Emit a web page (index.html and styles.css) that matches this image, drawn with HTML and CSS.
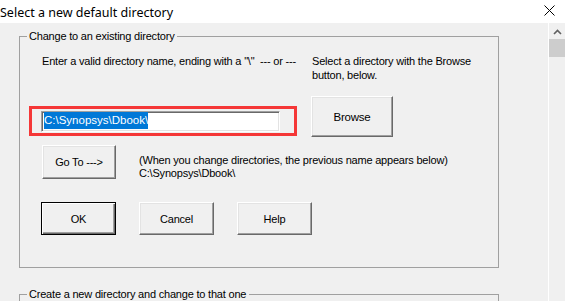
FILE: index.html
```html
<!DOCTYPE html>
<html lang="en">
<head>
    <meta charset="UTF-8">
    <title>Select a new default directory</title>
    <link rel="stylesheet" href="styles.css">
</head>
<body>
    <div class="titlebar">
        <span class="title">Select a new default directory</span>
        <svg class="close" width="11" height="11" viewBox="0 0 11 11">
            <path d="M0.5 0.5 L10.5 10.5 M10.5 0.5 L0.5 10.5" stroke="#000" stroke-width="1" fill="none"/>
        </svg>
    </div>

    <div class="window">
        <div class="pane">
            <fieldset class="group">
                <legend>Change to an existing directory</legend>

                <div class="row intro">
                    <div class="col-left">Enter a valid directory name, ending with a "\" &nbsp;--- or ---</div>
                    <div class="col-right">Select a directory with the Browse button, below.</div>
                </div>

                <div class="row pick">
                    <div class="highlight">
                        <div class="field"><span class="selected">C:\Synopsys\Dbook\</span></div>
                    </div>
                    <button class="btn browse">Browse</button>
                </div>

                <div class="row goto">
                    <button class="btn">Go To ---&gt;</button>
                    <div class="note">
                        (When you change directories, the previous name appears below)<br>
                        C:\Synopsys\Dbook\
                    </div>
                </div>

                <div class="row actions">
                    <button class="btn default">OK</button>
                    <button class="btn">Cancel</button>
                    <button class="btn">Help</button>
                </div>
            </fieldset>

            <fieldset class="group second">
                <legend>Create a new directory and change to that one</legend>
            </fieldset>
        </div>

        <div class="scrollbar">
            <svg class="arrow" width="9" height="6" viewBox="0 0 9 6">
                <path d="M1 5 L4.5 1.5 L8 5" stroke="#606060" stroke-width="1.6" fill="none"/>
            </svg>
            <div class="thumb"></div>
        </div>
    </div>
</body>
</html>
```

FILE: styles.css
```css
body {
    margin: 0;
    width: 565px;
    height: 301px;
    overflow: hidden;
    background-color: #f0f0f0;
    font-family: "Liberation Sans", Arial, sans-serif;
    font-size: 11px;
    letter-spacing: -0.2px;
    color: #000;
}
.titlebar {
    height: 23px;
    background-color: #fff;
    display: flex;
    align-items: center;
    justify-content: space-between;
    padding-right: 10px;
}
.title {
    font-family: "Noto Sans", sans-serif;
    font-size: 12.5px;
    letter-spacing: 0;
    color: #000;
    padding-top: 1px;
}
.close {
    display: block;
    margin-top: -2px;
}
.window {
    display: flex;
    height: 278px;
}
.pane {
    flex: 1;
    padding: 7px 0 0 19px;
    overflow: hidden;
}
.scrollbar {
    width: 16px;
    border-left: 1px solid #fff;
    display: flex;
    flex-direction: column;
    align-items: center;
}
.arrow {
    display: block;
    margin-top: 6px;
}
.thumb {
    width: 16px;
    height: 18px;
    margin-top: 4px;
    background-color: #cdcdcd;
}
.group {
    width: 480px;
    box-sizing: border-box;
    margin: 0;
    padding: 0 0 32px 0;
    border: 1px solid #a0a0a0;
}
.group legend {
    margin-left: 7px;
    padding: 0 3px 0 2px;
    line-height: 13px;
}
.second {
    margin-top: 20px;
    height: 60px;
}
.row {
    display: flex;
}
.intro {
    margin-top: 11px;
    padding-left: 22px;
    line-height: 14px;
}
.col-left {
    width: 270px;
}
.col-right {
    width: 170px;
}
.pick {
    margin-top: 14px;
    align-items: flex-start;
}
.highlight {
    margin: 10px 0 0 9px;
    width: 268px;
    height: 30px;
    box-sizing: border-box;
    border: 3px solid #f53737;
    padding: 2px 14px 1px 9px;
}
.field {
    height: 21px;
    box-sizing: border-box;
    background-color: #fff;
    border: 1px solid;
    border-color: #a0a0a0 #fff #fff #a0a0a0;
    box-shadow: inset 1px 1px 0 #696969, inset -1px -1px 0 #e3e3e3;
    padding: 2px 0 0 2px;
    font-size: 11.5px;
    letter-spacing: 0;
}
.selected {
    background-color: #0078d7;
    color: #fff;
    padding: 2px 0 3px;
}
.btn {
    font-family: "Liberation Sans", Arial, sans-serif;
    font-size: 11px;
    letter-spacing: -0.2px;
    color: #000;
    background-color: #f0f0f0;
    width: 75px;
    height: 33px;
    padding: 0;
    border: 1px solid;
    border-color: #fff #696969 #696969 #fff;
    box-shadow: inset -1px -1px 0 #a0a0a0, inset 1px 1px 0 #e3e3e3;
}
.btn.default {
    border: 1px solid #000;
    box-shadow: inset 1px 1px 0 #fff, inset -1px -1px 0 #696969, inset -2px -2px 0 #a0a0a0;
}
.browse {
    margin-left: 14px;
    width: 82px;
    height: 41px;
    font-size: 11.5px;
}
.goto {
    margin-top: 8px;
    padding-left: 22px;
}
.goto .btn {
    width: 74px;
    height: 34px;
}
.note {
    margin-left: 23px;
    padding-top: 9px;
    line-height: 13px;
}
.actions {
    margin-top: 22px;
    padding-left: 21px;
    gap: 23px;
}
```
